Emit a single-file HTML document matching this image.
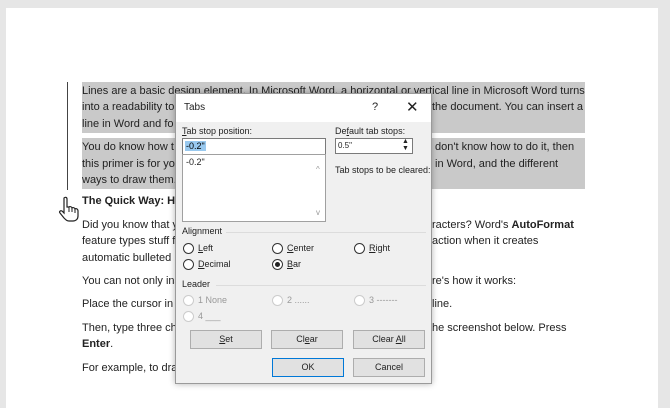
<!DOCTYPE html>
<html><head><meta charset="utf-8"><style>
*{margin:0;padding:0;box-sizing:border-box}
body{width:670px;height:402px;background:#e6e6e6;position:relative;overflow:hidden;font-family:"Liberation Sans",sans-serif}
#page{position:absolute;left:6px;top:8px;width:652px;height:400px;background:#fff}
.t{position:absolute;left:82px;font-size:11px;color:#222;white-space:nowrap;line-height:16.5px}
.hl{position:absolute;background:#c9c9c9}
.d{position:absolute;font-size:9px;color:#222;white-space:nowrap}
.g{color:#999}
.btn{position:absolute;height:19px;background:#e1e1e1;border:1px solid #adadad;font-size:9px;text-align:center;line-height:17px;color:#222}
.r{position:absolute;width:11px;height:11px;border:1px solid #333;border-radius:50%;background:#fff}
.r.dis{border-color:#ccc}
.sep{position:absolute;height:1px;background:#dcdcdc}
</style></head><body>
<div id="page"></div>
<div class="hl" style="left:82px;top:82px;width:503px;height:51px"></div>
<div class="hl" style="left:82px;top:138px;width:503px;height:51px"></div>
<div style="position:absolute;left:67px;top:82px;width:1px;height:108px;background:#444"></div>
<div class="t" style="top:83px">Lines are a basic design element. In Microsoft Word, a horizontal or vertical line in Microsoft Word turns</div>
<div class="t" style="top:99px">into a readability to the document. You can insert a</div>
<div class="t" style="top:99px;left:432px">the document. You can insert a</div>
<div class="t" style="top:116px">line in Word and fo</div>
<div class="t" style="top:139px">You do know how t</div>
<div class="t" style="top:139px;left:435px">don't know how to do it, then</div>
<div class="t" style="top:156px">this primer is for yo</div>
<div class="t" style="top:156px;left:435px">in Word, and the different</div>
<div class="t" style="top:172px">ways to draw them.</div>
<div class="t" style="top:193px;font-weight:bold">The Quick Way: Ho</div>
<div class="t" style="top:217px">Did you know that y</div>
<div class="t" style="top:217px;left:432px">racters? Word's <b>AutoFormat</b></div>
<div class="t" style="top:233px">feature types stuff f</div>
<div class="t" style="top:233px;left:432px">action when it creates</div>
<div class="t" style="top:250px">automatic bulleted</div>
<div class="t" style="top:273px">You can not only ins</div>
<div class="t" style="top:273px;left:432px">re's how it works:</div>
<div class="t" style="top:296px">Place the cursor in t</div>
<div class="t" style="top:296px;left:432px">line.</div>
<div class="t" style="top:320px">Then, type three ch</div>
<div class="t" style="top:320px;left:432px">he screenshot below. Press</div>
<div class="t" style="top:336px;font-weight:bold">Enter<span style="font-weight:normal">.</span></div>
<div class="t" style="top:360px">For example, to dra</div>
<svg style="position:absolute;left:58px;top:196px" width="22" height="26" viewBox="0 0 22 26"><path d="M6 2c1-1 3-1 3 1v8l2 0c1-1 3 0 3 1c1-1 3 0 3 1c1-1 3 0 3 2v5c0 3-2 5-5 5h-4c-2 0-3-1-5-3l-4-5c-1-1 0-3 2-2l2 2V3z" fill="#fff" stroke="#222" stroke-width="1.2"/><path d="M11 11v5M14 12v4M17 13v4" stroke="#222" stroke-width="1"/></svg>

<div style="position:absolute;left:175px;top:93px;width:257px;height:291px;background:#f0f0f0;border:1px solid #9a9a9a;box-shadow:0 0 6px rgba(0,0,0,.3)">
 <div style="position:absolute;left:0;top:0;width:255px;height:28px;background:#fff"></div>
 <div class="d" style="left:8px;top:8px;font-size:10px">Tabs</div>
 <div class="d" style="left:196px;top:7px;font-size:11px">?</div>
 <div class="d" style="left:230px;top:4px;font-size:15px;font-weight:300">✕</div>
 <div class="d" style="left:6px;top:32px"><u>T</u>ab stop position:</div>
 <div style="position:absolute;left:6px;top:44px;width:144px;height:17px;background:#fff;border:1px solid #7a7a7a"><span style="position:absolute;left:2px;top:2px;background:#99c9ef;font-size:9px;padding:0 1px">-0.2"</span></div>
 <div style="position:absolute;left:6px;top:60px;width:144px;height:68px;background:#fff;border:1px solid #a0a0a0"><span class="d" style="left:3px;top:2px">-0.2"</span><span class="d g" style="left:133px;top:10px;font-size:8px">^</span><span class="d g" style="left:133px;top:53px;font-size:8px">v</span></div>
 <div class="d" style="left:159px;top:32px">De<u>f</u>ault tab stops:</div>
 <div style="position:absolute;left:159px;top:44px;width:78px;height:16px;background:#fff;border:1px solid #7a7a7a"><span class="d" style="left:2px;top:2px;font-size:8px">0.5"</span><span class="d" style="left:66px;top:-1px;font-size:7px;line-height:7px">▲<br>▼</span></div>
 <div class="d" style="left:159px;top:71px">Tab stops to be cleared:</div>
 <div class="d" style="left:6px;top:132px">Alignment</div><div class="sep" style="left:50px;top:138px;width:200px"></div>
 <div class="r" style="left:7px;top:149px"></div><div class="d" style="left:22px;top:149px"><u>L</u>eft</div>
 <div class="r" style="left:96px;top:149px"></div><div class="d" style="left:111px;top:149px"><u>C</u>enter</div>
 <div class="r" style="left:178px;top:149px"></div><div class="d" style="left:193px;top:149px"><u>R</u>ight</div>
 <div class="r" style="left:7px;top:165px"></div><div class="d" style="left:22px;top:165px"><u>D</u>ecimal</div>
 <div class="r" style="left:96px;top:165px"><div style="position:absolute;left:2px;top:2px;width:5px;height:5px;border-radius:50%;background:#222"></div></div><div class="d" style="left:111px;top:165px"><u>B</u>ar</div>
 <div class="d" style="left:6px;top:185px">Leader</div><div class="sep" style="left:40px;top:191px;width:210px"></div>
 <div class="r dis" style="left:7px;top:201px"></div><div class="d g" style="left:22px;top:201px">1 None</div>
 <div class="r dis" style="left:96px;top:201px"></div><div class="d g" style="left:111px;top:201px">2 ......</div>
 <div class="r dis" style="left:178px;top:201px"></div><div class="d g" style="left:193px;top:201px">3 -------</div>
 <div class="r dis" style="left:7px;top:217px"></div><div class="d g" style="left:22px;top:217px">4 ___</div>
 <div class="btn" style="left:14px;top:236px;width:72px"><u>S</u>et</div>
 <div class="btn" style="left:95px;top:236px;width:72px">Cl<u>e</u>ar</div>
 <div class="btn" style="left:177px;top:236px;width:72px">Clear <u>A</u>ll</div>
 <div class="btn" style="left:96px;top:264px;width:72px;border:1px solid #0078d7">OK</div>
 <div class="btn" style="left:177px;top:264px;width:72px">Cancel</div>
</div>
</body></html>
